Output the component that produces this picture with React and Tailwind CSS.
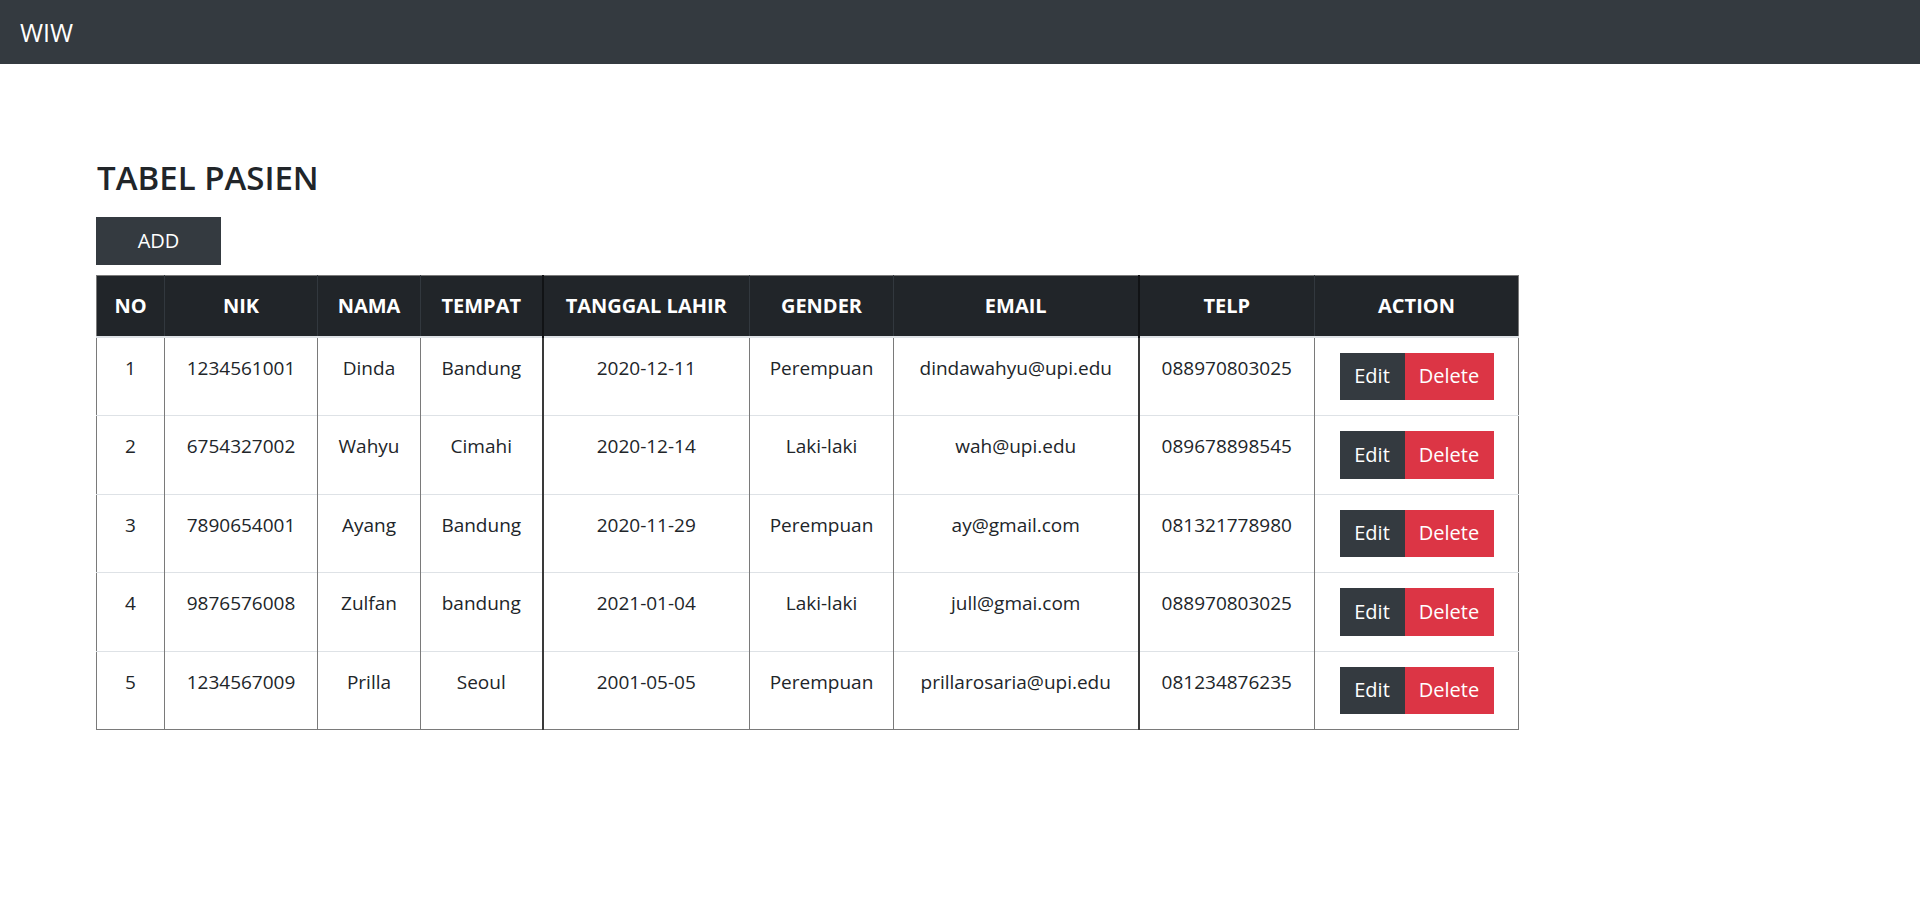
import React from "react";

const rows = [
  { no: 1, nik: "1234561001", nama: "Dinda", tempat: "Bandung", tgl: "2020-12-11", gender: "Perempuan", email: "dindawahyu@upi.edu", telp: "088970803025" },
  { no: 2, nik: "6754327002", nama: "Wahyu", tempat: "Cimahi", tgl: "2020-12-14", gender: "Laki-laki", email: "wah@upi.edu", telp: "089678898545" },
  { no: 3, nik: "7890654001", nama: "Ayang", tempat: "Bandung", tgl: "2020-11-29", gender: "Perempuan", email: "ay@gmail.com", telp: "081321778980" },
  { no: 4, nik: "9876576008", nama: "Zulfan", tempat: "bandung", tgl: "2021-01-04", gender: "Laki-laki", email: "jull@gmai.com", telp: "088970803025" },
  { no: 5, nik: "1234567009", nama: "Prilla", tempat: "Seoul", tgl: "2001-05-05", gender: "Perempuan", email: "prillarosaria@upi.edu", telp: "081234876235" },
];

export default function App() {
  return (
    <div className="min-h-screen bg-white text-[#212529] font-['Open_Sans',sans-serif]">
      {/* Navbar */}
      <nav className="h-[64px] bg-[#343a40] flex items-center px-[20px]">
        <span className="text-white text-[25px] leading-none">WIW</span>
      </nav>

      <div className="pl-[96px] pt-[93px]">
        <h2 className="text-[33px] leading-[42px] font-semibold ml-[1px]">TABEL PASIEN</h2>

        <button className="mt-[18px] w-[125px] h-[48px] bg-[#343a40] text-white text-[20px]">
          ADD
        </button>

        <table className="mt-[10px] table-fixed w-[1422px] border-collapse border border-[#7a7a7a] text-[19px] leading-[30px]">
          <colgroup>
            <col className="w-[68px]" />
            <col className="w-[153px]" />
            <col className="w-[103px]" />
            <col className="w-[122px]" />
            <col className="w-[207px]" />
            <col className="w-[144px]" />
            <col className="w-[245px]" />
            <col className="w-[176px]" />
            <col className="w-[204px]" />
          </colgroup>
          <thead>
            <tr className="bg-[#212529] text-white h-[61px] border-b-2 border-[#dee2e6] text-[20px]">
              <th className="font-bold border-r border-[#32383e]">NO</th>
              <th className="font-bold border-r border-[#32383e]">NIK</th>
              <th className="font-bold border-r border-[#32383e]">NAMA</th>
              <th className="font-bold border-r-2 border-[#111315]">TEMPAT</th>
              <th className="font-bold border-r border-[#32383e]">TANGGAL LAHIR</th>
              <th className="font-bold border-r border-[#32383e]">GENDER</th>
              <th className="font-bold border-r-2 border-[#111315]">EMAIL</th>
              <th className="font-bold border-r border-[#32383e]">TELP</th>
              <th className="font-bold">ACTION</th>
            </tr>
          </thead>
          <tbody>
            {rows.map((r) => (
              <tr key={r.no} className="border-b border-[#dee2e6] last:border-[#7a7a7a] text-center align-top">
                <td className="pt-[15px] border-r border-[#7a7a7a]">{r.no}</td>
                <td className="pt-[15px] border-r border-[#7a7a7a]">{r.nik}</td>
                <td className="pt-[15px] border-r border-[#7a7a7a]">{r.nama}</td>
                <td className="pt-[15px] border-r-2 border-[#3a3a3a]">{r.tempat}</td>
                <td className="pt-[15px] border-r border-[#7a7a7a]">{r.tgl}</td>
                <td className="pt-[15px] border-r border-[#7a7a7a]">{r.gender}</td>
                <td className="pt-[15px] border-r-2 border-[#3a3a3a]">{r.email}</td>
                <td className="pt-[15px] border-r border-[#7a7a7a]">{r.telp}</td>
                <td className="py-[15px]">
                  <div className="flex justify-center text-[20px]">
                    <button className="w-[65px] h-[47.5px] bg-[#343a40] text-white">Edit</button>
                    <button className="w-[89px] h-[47.5px] bg-[#dc3545] text-white">Delete</button>
                  </div>
                </td>
              </tr>
            ))}
          </tbody>
        </table>
      </div>
    </div>
  );
}
